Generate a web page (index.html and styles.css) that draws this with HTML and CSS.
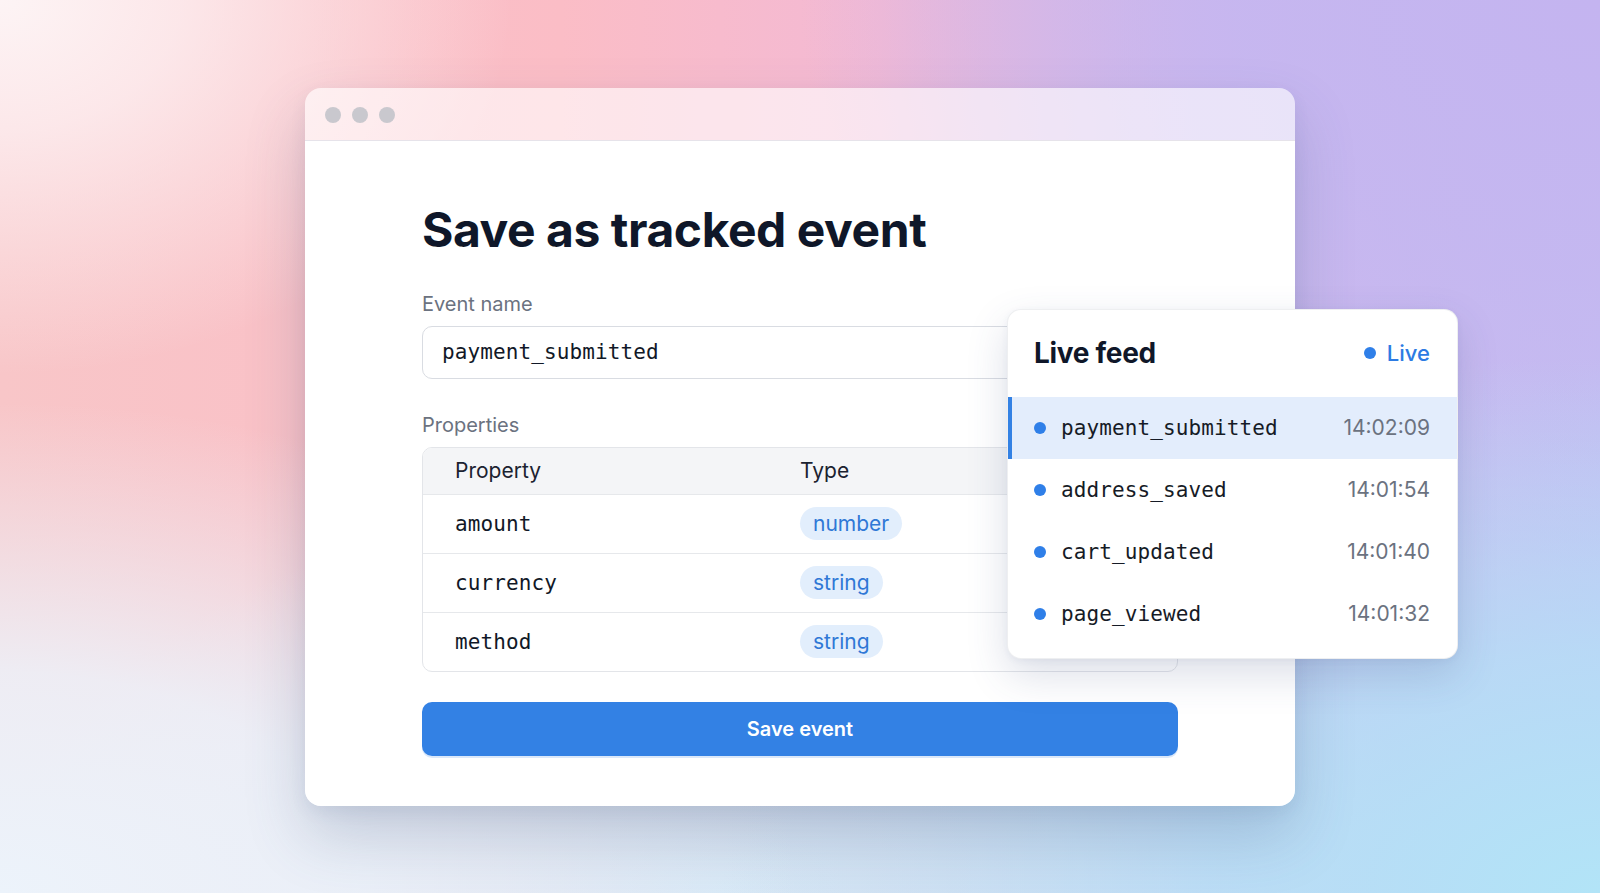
FILE: index.html
```html
<!DOCTYPE html>
<html lang="en">
<head>
<meta charset="utf-8">
<title>Save as tracked event</title>
<link rel="stylesheet" href="styles.css">
</head>
<body>
<div class="stage">
  <div class="window">
    <div class="titlebar">
      <span class="tl"></span><span class="tl"></span><span class="tl"></span>
    </div>
    <div class="content">
      <h1 class="title">Save as tracked event</h1>
      <label class="label">Event name</label>
      <div class="input"><span class="mono">payment_submitted</span></div>
      <label class="label label-props">Properties</label>
      <div class="table">
        <div class="row head">
          <div class="cell">Property</div>
          <div class="cell">Type</div>
        </div>
        <div class="row">
          <div class="cell mono">amount</div>
          <div class="cell"><span class="badge">number</span></div>
        </div>
        <div class="row">
          <div class="cell mono">currency</div>
          <div class="cell"><span class="badge">string</span></div>
        </div>
        <div class="row">
          <div class="cell mono">method</div>
          <div class="cell"><span class="badge">string</span></div>
        </div>
      </div>
      <button class="save">Save event</button>
    </div>

    <div class="feed">
      <div class="feed-head">
        <div class="feed-title">Live feed</div>
        <div class="live"><span class="dot"></span>Live</div>
      </div>
      <div class="feed-list">
        <div class="feed-row active"><span class="dot"></span><span class="ev mono">payment_submitted</span><span class="time">14:02:09</span></div>
        <div class="feed-row"><span class="dot"></span><span class="ev mono">address_saved</span><span class="time">14:01:54</span></div>
        <div class="feed-row"><span class="dot"></span><span class="ev mono">cart_updated</span><span class="time">14:01:40</span></div>
        <div class="feed-row"><span class="dot"></span><span class="ev mono">page_viewed</span><span class="time">14:01:32</span></div>
      </div>
    </div>
  </div>
</div>
</body>
</html>
```
FILE: styles.css
```css
* { box-sizing: border-box; }
html, body { margin: 0; padding: 0; }
body {
  width: 1600px;
  height: 893px;
  overflow: hidden;
  font-family: Inter, "Noto Sans", "Liberation Sans", sans-serif;
  background:
    radial-gradient(ellipse 32% 42% at 0% 0%, rgba(253,244,245,1) 0%, rgba(253,240,242,0.8) 35%, rgba(253,240,242,0) 100%),
    radial-gradient(ellipse 50% 55% at 0% 100%, rgba(236,243,251,1) 0%, rgba(236,243,251,0.85) 45%, rgba(236,243,251,0) 100%),
    radial-gradient(ellipse 55% 60% at 100% 100%, rgba(178,228,247,1) 0%, rgba(180,226,247,0.75) 45%, rgba(180,226,247,0) 100%),
    radial-gradient(ellipse 45% 45% at 45% 100%, rgba(214,232,246,1) 0%, rgba(214,232,246,0.7) 50%, rgba(214,232,246,0) 100%),
    radial-gradient(ellipse 50% 65% at 100% 0%, rgba(196,180,240,1) 0%, rgba(196,182,240,0.8) 45%, rgba(196,182,240,0) 100%),
    linear-gradient(90deg, #f8c6c8 0%, #fbbdc6 35%, #f3b9d4 55%, #d2b8ec 75%, #c4bef2 100%);
}
.stage {
  width: 1600px;
  height: 893px;
  display: flex;
  align-items: center;
  justify-content: center;
}
.window {
  position: relative;
  width: 990px;
  height: 718px;
  border-radius: 16px;
  background: transparent;
  box-shadow: 0 30px 60px rgba(70, 90, 130, 0.24), 0 6px 16px rgba(70, 90, 130, 0.08);
}
.titlebar {
  height: 53px;
  border-radius: 16px 16px 0 0;
  background: rgba(255, 255, 255, 0.62);
  border-bottom: 1px solid #e6e3ea;
  display: flex;
  align-items: center;
  gap: 11px;
  padding: 2px 0 0 20px;
}
.tl {
  width: 16px;
  height: 16px;
  border-radius: 50%;
  background: #c9c8ce;
}
.content {
  background: #fff;
  height: 665px;
  border-radius: 0 0 16px 16px;
  padding: 60px 117px 0;
  display: flex;
  flex-direction: column;
}
.title {
  margin: 0;
  font-size: 48px;
  line-height: 58px;
  font-weight: 700;
  color: #0f1729;
  letter-spacing: -0.45px;
}
.label {
  display: block;
  margin-top: 33px;
  font-size: 20px;
  line-height: 24px;
  color: #6b7280;
}
.label-props { margin-top: 34px; }
.input {
  margin-top: 10px;
  height: 53px;
  border: 1px solid #d9dce2;
  border-radius: 10px;
  padding: 0 19px;
  display: flex;
  align-items: center;
  color: #111827;
}
.mono {
  font-family: "DejaVu Sans Mono", "Liberation Mono", monospace;
  font-size: 21px;
  line-height: 30px;
  letter-spacing: 0.1px;
}
.table {
  margin-top: 10px;
  border: 1px solid #e3e5e9;
  border-radius: 10px;
  overflow: hidden;
}
.row {
  display: grid;
  grid-template-columns: 1fr 1fr;
  padding: 0 32px;
  height: 59px;
  align-items: center;
  border-top: 1px solid #e6e8eb;
  font-size: 21px;
  color: #111827;
}
.row.head {
  border-top: 0;
  height: 46px;
  background: #f4f5f7;
  color: #1b2230;
}
.badge {
  display: inline-flex;
  align-items: center;
  height: 33px;
  padding: 0 13px;
  border-radius: 17px;
  background: #e2eefc;
  color: #2f78d6;
  font-size: 21px;
}
.save {
  margin-top: 30px;
  height: 54px;
  border: 0;
  border-radius: 10px;
  background: #3381e4;
  color: #fff;
  font-family: Inter, "Noto Sans", sans-serif;
  font-size: 20px;
  font-weight: 600;
  box-shadow: 0 2px 0 rgba(51, 129, 228, 0.18);
}
.feed {
  position: absolute;
  left: 702px;
  top: 221px;
  width: 451px;
  height: 350px;
  background: #fff;
  border-radius: 14px;
  border: 1px solid rgba(20, 30, 60, 0.07);
  box-shadow: 0 16px 40px rgba(60, 80, 130, 0.18), 0 2px 6px rgba(60, 80, 130, 0.06);
  overflow: hidden;
}
.feed-head {
  height: 87px;
  display: flex;
  align-items: center;
  justify-content: space-between;
  padding: 0 27px 0 26px;
}
.feed-title {
  font-size: 28px;
  font-weight: 700;
  color: #0f1729;
  letter-spacing: -0.3px;
}
.live {
  display: flex;
  align-items: center;
  gap: 11px;
  font-size: 22px;
  font-weight: 500;
  color: #2d7be3;
}
.dot {
  width: 12px;
  height: 12px;
  border-radius: 50%;
  background: #2f7fe8;
  flex: none;
}
.feed-row {
  height: 62px;
  display: flex;
  align-items: center;
  padding: 0 27px 0 26px;
}
.feed-row .dot { margin-right: 15px; }
.feed-row.active {
  background: #e3edfc;
  box-shadow: inset 4px 0 0 #3381e4;
}
.ev {
  flex: 1;
  color: #161b26;
}
.time {
  font-size: 21px;
  color: #6b7280;
}
```
